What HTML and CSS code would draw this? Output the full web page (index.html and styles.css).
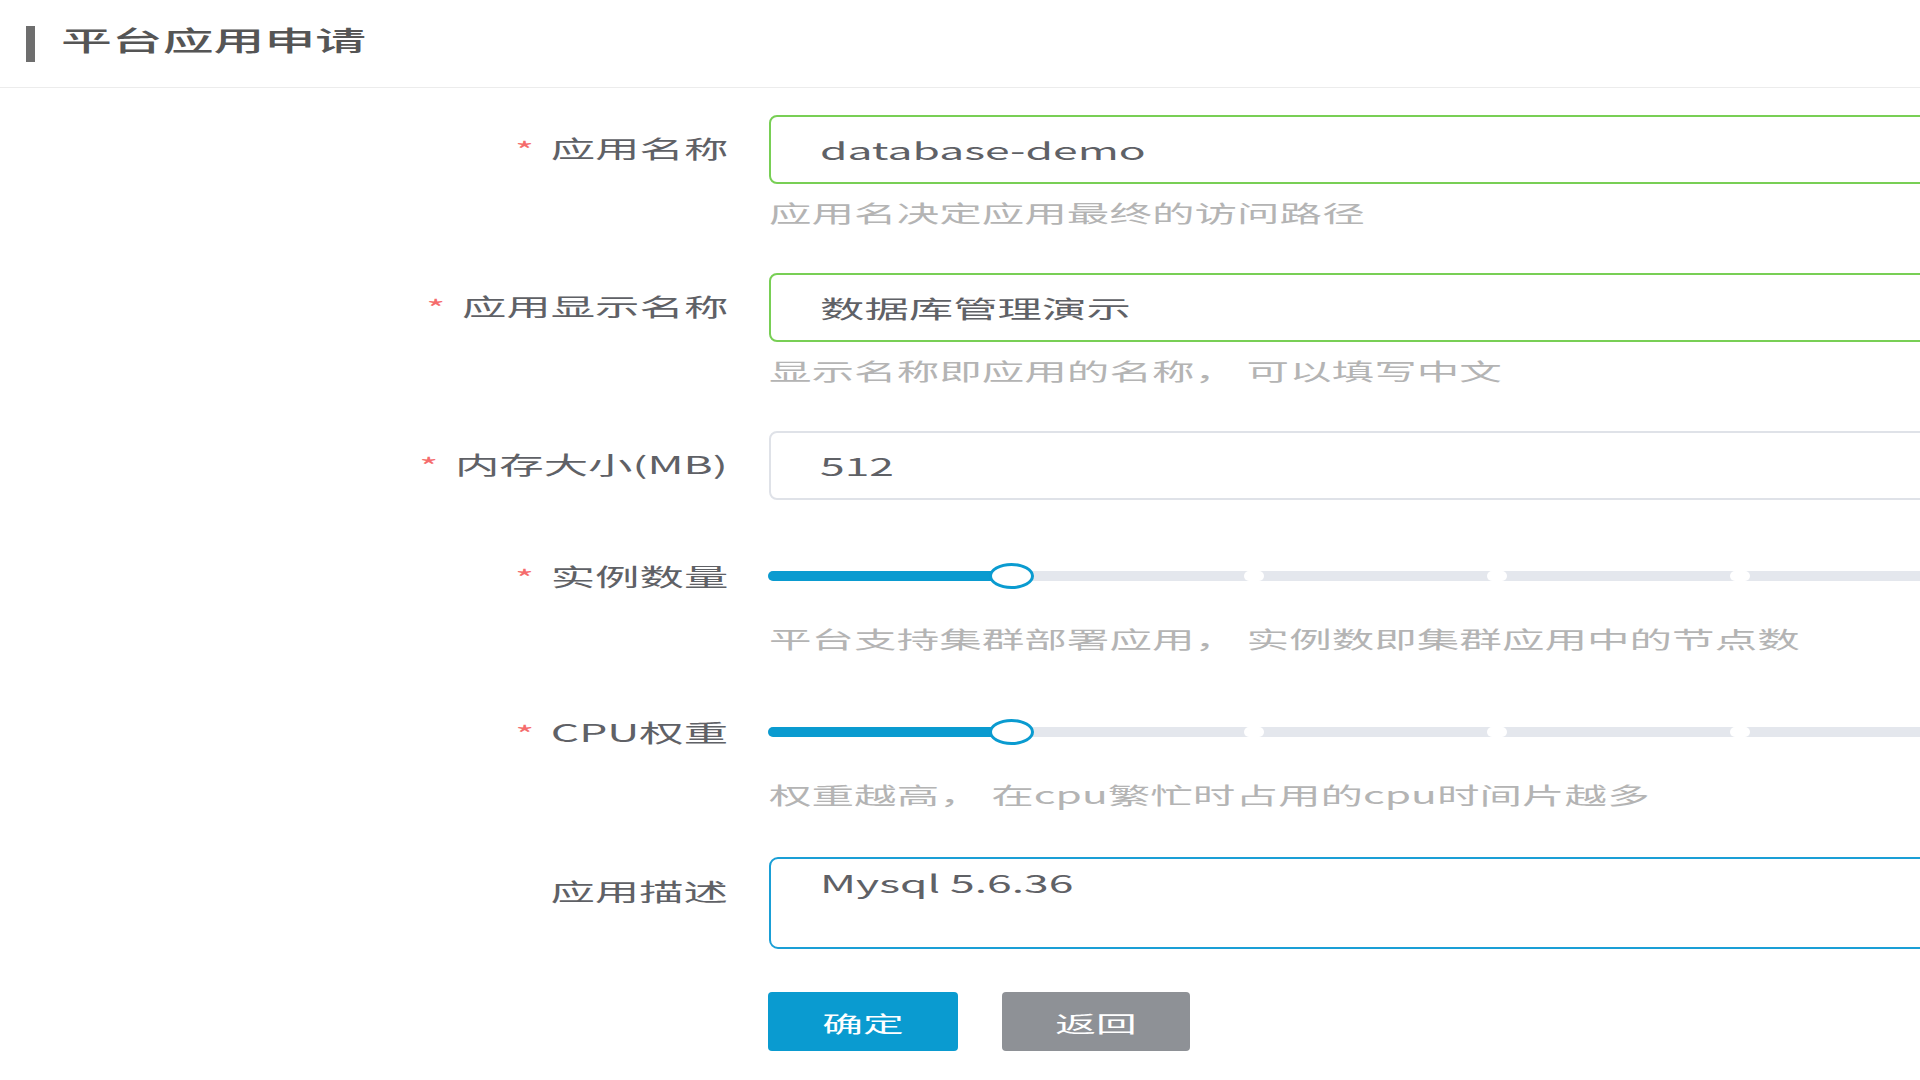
FILE: index.html
```html
<!DOCTYPE html>
<html lang="zh-CN">
<head>
<meta charset="utf-8">
<title>平台应用申请</title>
<link rel="stylesheet" href="styles.css">
</head>
<body>
<div class="page">
  <header class="page-head">
    <span class="bar"></span>
    <h1 class="title"><span class="sx">平台应用申请</span></h1>
  </header>
  <form class="form">
    <div class="item">
      <label class="label"><span class="sx"><i class="req">*</i>应用名称</span></label>
      <div class="ctrl">
        <div class="input ok"><span class="sx">database-demo</span></div>
        <div class="help"><span class="sx">应用名决定应用最终的访问路径</span></div>
      </div>
    </div>
    <div class="item">
      <label class="label"><span class="sx"><i class="req">*</i>应用显示名称</span></label>
      <div class="ctrl">
        <div class="input ok"><span class="sx">数据库管理演示</span></div>
        <div class="help"><span class="sx">显示名称即应用的名称， 可以填写中文</span></div>
      </div>
    </div>
    <div class="item item-gap">
      <label class="label"><span class="sx"><i class="req">*</i>内存大小(MB)</span></label>
      <div class="ctrl">
        <div class="input"><span class="sx">512</span></div>
      </div>
    </div>
    <div class="item item-slider">
      <label class="label"><span class="sx"><i class="req">*</i>实例数量</span></label>
      <div class="ctrl">
        <div class="slider">
          <div class="track">
            <div class="fill" style="width:20%"></div>
            <span class="stop" style="left:40%"></span>
            <span class="stop" style="left:60%"></span>
            <span class="stop" style="left:80%"></span>
            <span class="thumb" style="left:20%"></span>
          </div>
        </div>
        <div class="help"><span class="sx">平台支持集群部署应用， 实例数即集群应用中的节点数</span></div>
      </div>
    </div>
    <div class="item item-slider item-last">
      <label class="label"><span class="sx"><i class="req">*</i>CPU权重</span></label>
      <div class="ctrl">
        <div class="slider">
          <div class="track">
            <div class="fill" style="width:20%"></div>
            <span class="stop" style="left:40%"></span>
            <span class="stop" style="left:60%"></span>
            <span class="stop" style="left:80%"></span>
            <span class="thumb" style="left:20%"></span>
          </div>
        </div>
        <div class="help"><span class="sx">权重越高， 在cpu繁忙时占用的cpu时间片越多</span></div>
      </div>
    </div>
    <div class="item item-desc">
      <label class="label"><span class="sx">应用描述</span></label>
      <div class="ctrl">
        <div class="textarea"><span class="sx">Mysql 5.6.36</span></div>
      </div>
    </div>
    <div class="actions">
      <button type="button" class="btn btn-primary"><span class="sx sx-c">确定</span></button>
      <button type="button" class="btn btn-gray"><span class="sx sx-c">返回</span></button>
    </div>
  </form>
</div>
</body>
</html>
```
FILE: styles.css
```css
html, body {
  margin: 0;
  padding: 0;
  overflow: hidden;
  background: #ffffff;
}
body {
  width: 1920px;
  height: 1080px;
  font-family: "Noto Sans CJK SC", "Noto Sans", sans-serif;
  color: #606266;
}
.sx {
  display: inline-block;
  white-space: nowrap;
  transform: scaleX(1.85);
  transform-origin: left center;
}
.sx-c {
  transform-origin: center center;
}
.page-head {
  height: 87px;
  border-bottom: 1px solid #ececec;
  display: flex;
  align-items: center;
}
.bar {
  width: 9px;
  height: 36px;
  margin-left: 26px;
  background: #6e6e6e;
}
.title {
  margin: 0 0 10px 26px;
  font-size: 27.5px;
  font-weight: 500;
  color: #555555;
  line-height: 40px;
}
.form {
  padding-top: 27px;
}
.item {
  display: flex;
  align-items: flex-start;
  margin-bottom: 43px;
}
.item-gap {
  margin-bottom: 56px;
}
.item-slider {
  margin-bottom: 56px;
}
.item-last {
  margin-bottom: 45px;
}
.label {
  flex: none;
  width: 728px;
  text-align: right;
  height: 69px;
  line-height: 65px;
  font-size: 24px;
  color: #5f6166;
}
.label .sx {
  transform-origin: right center;
}
.req {
  font-style: normal;
  color: #f56c6c;
  margin-right: 9px;
  font-size: 22px;
}
.ctrl {
  flex: none;
  width: 1300px;
  margin-left: 41px;
}
.input {
  box-sizing: border-box;
  height: 69px;
  border: 2px solid #dfe2e8;
  border-radius: 8px;
  padding-left: 49px;
  line-height: 65px;
  font-size: 24px;
  color: #5f6166;
}
.input.ok {
  border-color: #78cf55;
}
.help {
  margin-top: 10px;
  line-height: 36px;
  font-size: 23px;
  color: #b4b4b4;
}
.item-slider .label {
  height: 40px;
  line-height: 40px;
}
.item-slider .help {
  margin-top: 24px;
}
.slider {
  height: 40px;
  display: flex;
  align-items: center;
  margin-left: -1px;
}
.track {
  position: relative;
  width: 1215px;
  height: 10px;
  border-radius: 5px;
  background: #e4e7ed;
}
.fill {
  height: 100%;
  border-radius: 5px;
  background: #0a9bd0;
}
.stop {
  position: absolute;
  top: 0;
  width: 20px;
  height: 10px;
  margin-left: -10px;
  border-radius: 5px;
  background: #ffffff;
}
.thumb {
  position: absolute;
  top: 50%;
  box-sizing: border-box;
  width: 45px;
  height: 26px;
  margin: -13px 0 0 -22px;
  border: 3px solid #0a9bd0;
  border-radius: 50%;
  background: #ffffff;
}
.item-desc .label {
  height: 68px;
  line-height: 68px;
}
.textarea {
  box-sizing: border-box;
  height: 92px;
  border: 2px solid #1a9fd6;
  border-radius: 9px;
  padding: 6px 0 0 49px;
  line-height: 36px;
  font-size: 24px;
  color: #5f6166;
}
.actions {
  display: flex;
  gap: 44px;
  margin-left: 768px;
}
.btn {
  height: 59px;
  border: none;
  border-radius: 4px;
  padding: 0;
  font-family: "Noto Sans CJK SC", "Noto Sans", sans-serif;
  font-size: 22px;
  color: #ffffff;
  cursor: pointer;
}
.btn-primary {
  width: 190px;
  background: #0a9bd0;
}
.btn-gray {
  width: 188px;
  background: #8e9196;
}
```
